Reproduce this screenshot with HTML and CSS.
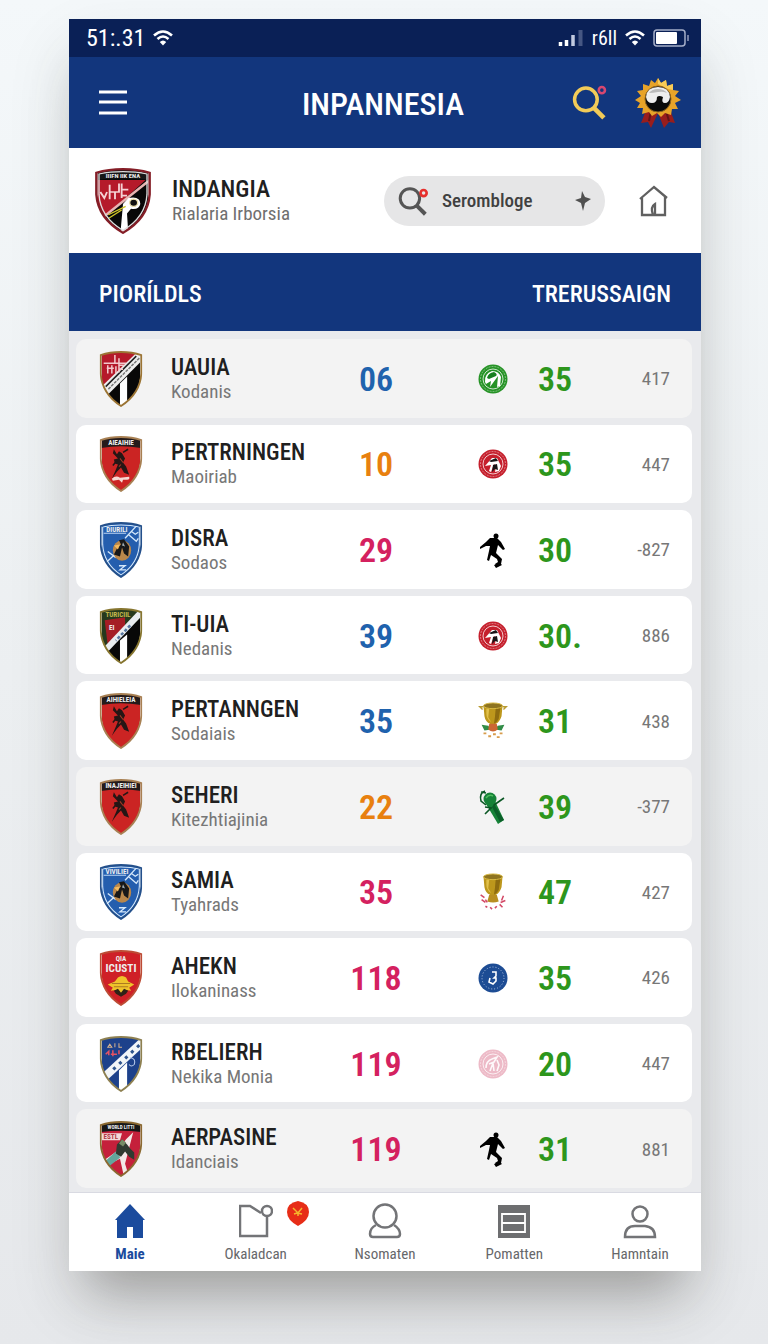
FILE: index.html
```html
<!DOCTYPE html>
<html lang="en">
<head>
  <meta charset="UTF-8">
  <meta name="viewport" content="width=device-width, initial-scale=1.0">
  <title>INPANNESIA</title>
  <link rel="stylesheet" href="styles.css">
</head>
<body>

  <!-- Shared shapes -->
  <svg class="defs" aria-hidden="true">
    <clipPath id="shield"><path d="M21 1C14 1 7 2 2 4V22C2 37 10 47 21 54C32 47 40 37 40 22V4C35 2 28 1 21 1Z"/></clipPath>
    <symbol id="outline" viewBox="0 0 42 55">
      <path d="M21 1C14 1 7 2 1 4V22C2 37 10 47 21 54C32 47 40 37 41 22V4C35 2 28 1 21 1Z" fill="none" stroke="currentColor" stroke-width="1.800"/>
    </symbol>
    <symbol id="wifi" viewBox="0 0 20 16">
      <path d="M1 5.500Q10-2.500 19 5.500M4.500 9Q10 4 15.500 9" fill="none" stroke="currentColor" stroke-width="2.600"/>
      <path d="M6.800 12Q10 9 13.200 12L10 15.500Z" fill="currentColor"/>
    </symbol>
    <symbol id="search" viewBox="0 0 34 34">
      <circle cx="13.500" cy="14" r="11" fill="none" stroke="currentColor" stroke-width="3.400"/>
      <path d="M21 22L31 32" stroke="currentColor" stroke-width="4.500"/>
    </symbol>
    <symbol id="crest-diagonal" viewBox="0 0 42 55">
      <g clip-path="url(#shield)">
        <path d="M0 0H42V55H0Z" fill="#080808"/>
        <path d="M0 0H42V4L5 41H0Z" fill="#b51a2a"/>
        <path d="M37 1L3 34L8 43L42 9V1Z" fill="#eee"/>
        <path d="M36 5L6 35" stroke="#222" stroke-width="1.500"/>
        <path d="M39 7L8 38" stroke="#777" stroke-width="1.500" stroke-dasharray="3 1"/>
        <path d="M20 32L27 25V55H20Z" fill="#fff"/>
        <path d="M15 4V12M4 12H26M19 7V21M8 14V22M12 14V22M16 15V22M7 17H14M19 14H24M19 18H23" stroke="#f2c8cb" stroke-width="1.500" fill="none"/>
      </g>
      <use href="#outline" color="#9b7434"/>
    </symbol>
    <symbol id="crest-red" viewBox="0 0 42 55">
      <g clip-path="url(#shield)">
        <path d="M0 0H42V55H0Z" fill="#cb2423"/>
        <path d="M0 0H42V12Q21 8 0 12Z" fill="#241b1b"/>
        <path d="M14 13L17 18L19 15L22 17L25 22L23 26L26 30L29 38L24 36L21 31L17 35L12 42L16 33L18 28L15 27L14 23L18 22L13 17Z" fill="#251615"/>
        <path d="M23 16L28 13M17 24L13 29" stroke="#251615" stroke-width="1.500"/>
        <path d="M20 22L23 26M19 30L21 28" stroke="#a53a25"/>
      </g>
      <use href="#outline" color="#a88053"/>
    </symbol>
    <symbol id="crest-blue" viewBox="0 0 42 55">
      <g clip-path="url(#shield)">
        <path d="M0 0H42V55H0Z" fill="#245eae"/>
        <path d="M4 11H26" stroke="#bdd6f3"/>
        <path d="M36 4L25 16M28 12L36 19L38 16M31 9L35 12L38 10M16 31L5 41M8 29L16 35M19 43H25L20 47H26" fill="none" stroke="#d5e8fa" stroke-width="1.300"/>
        <ellipse cx="22" cy="28" rx="9" ry="10" fill="#b9874b"/>
        <path d="M19 18L24 17L29 24L28 34L24 31L22 25L20 34L14 32L17 26L21 22Z" fill="#171819"/>
        <path d="M14 23L20 22L18 27Z" fill="#f2bb60"/>
        <path d="M23 20L25 24L22 23Z" fill="#9eabb2"/>
      </g>
      <path d="M21 3Q11 3 3 5V22Q4 41 21 52Q38 41 39 22V5Q31 3 21 3Z" fill="none" stroke="#d5e8fa"/>
      <use href="#outline" color="#24508b"/>
    </symbol>
    <symbol id="seal" viewBox="0 0 30 30">
      <circle cx="15" cy="15" r="14.500" fill="currentColor"/>
      <circle cx="15" cy="15" r="10" fill="none" stroke="#fff" stroke-opacity=".75"/>
      <circle cx="15" cy="15" r="12.500" fill="none" stroke="#fff" stroke-opacity=".4" stroke-dasharray="2 1"/>
    </symbol>
    <symbol id="seal-red" viewBox="0 0 30 30">
      <use href="#seal" color="#c51f2c"/>
      <path d="M7 17L14 9L19 9L23 17L21 22L17 23L18 17L16 15L13 23L11 22L13 16Z" fill="#fff"/>
      <path d="M11 12L18 9L20 12L13 13ZM15 16L19 15L20 21L17 20L14 23Z" fill="#181416"/>
    </symbol>
    <symbol id="player" viewBox="0 0 30 36">
      <circle cx="18" cy="4" r="2.500"/>
      <path d="M12 6L19 6L23 10L27 17L25 18L20 13L18 21L24 27L23 32L19 35L17 32L20 30L19 27L13 23L11 29L9 28L11 19L12 14L8 14L2 17V15L8 10Z"/>
      <path d="M16 33L22 31L24 33L18 36Z"/>
    </symbol>
    <symbol id="cup" viewBox="0 0 30 40">
      <path d="M5 4H25L24 15Q22 21 18 23L19 28H11L12 23Q7 21 6 15Z" fill="#bd971c"/>
      <path d="M18 5H23L21 18Q19 22 16 23L17 16Z" fill="#8e6c10"/>
      <path d="M8 7H11L10 16L13 21Q8 18 8 12Z" fill="#e2c14b"/>
      <ellipse cx="15" cy="4" rx="10" ry="3" fill="#8e7420" stroke="#d9ba45"/>
    </symbol>
  </svg>

  <div class="phone">
    <div class="status">
      <div class="status-group">
        <span class="time">51:.31</span>
        <svg class="wifi" aria-hidden="true"><use href="#wifi"/></svg>
      </div>
      <div class="status-group">
        <svg class="signal" viewBox="0 0 26 18" aria-hidden="true">
          <path d="M2.500 17V13M8.500 17V11" stroke="#fff" stroke-width="3.500"/>
          <path d="M15 17V6" stroke="#c2cae0" stroke-width="3.500"/>
          <path d="M22.500 17V1" stroke="#465783" stroke-width="4"/>
        </svg>
        <span class="carrier">r6ll</span>
        <svg class="wifi" aria-hidden="true"><use href="#wifi"/></svg>
        <svg class="battery" viewBox="0 0 37 18" aria-hidden="true">
          <rect x="1" y="1" width="31" height="16" rx="3" fill="none" stroke="#a5aec9" stroke-width="1.500"/>
          <rect x="3" y="3" width="21" height="12" rx="1" fill="#fff"/>
          <path d="M35 6V12" stroke="#717da3" stroke-width="2"/>
        </svg>
      </div>
    </div>

    <header class="topbar">
      <button class="icon-button" aria-label="Menu">
        <svg class="menu-icon" viewBox="0 0 28 26"><path d="M0 2H28M0 12H28M0 23H28" stroke="#fff" stroke-width="3"/></svg>
      </button>
      <h1>INPANNESIA</h1>
      <div class="topbar-actions">
        <button class="icon-button" aria-label="Search">
          <svg class="top-search" viewBox="0 0 34 34">
            <use href="#search" color="#f2cb58"/>
            <circle cx="29" cy="5" r="3" fill="none" stroke="#d74770" stroke-width="2.500"/>
          </svg>
        </button>
        <button class="icon-button" aria-label="Award">
          <svg class="award" viewBox="0 0 46 52">
            <path d="M12 31L6 46L13 45L16 51L23 36L29 51L34 45L40 46L34 30Z" fill="#981d1c"/>
            <path d="M16 34L14 44M31 34L34 44" stroke="#621417" stroke-width="2"/>
            <path d="M23 1L26 6L31 3L32 9L38 7L38 13L44 14L40 19L46 23L40 26L43 32L37 32L36 38L30 36L26 40L22 36L17 39L14 35L7 37L8 31L2 31L5 26L0 23L6 19L2 14L8 13L8 7L14 9L16 3L20 6Z" fill="#e7a329"/>
            <path d="M23 1L26 6L31 3L32 9L38 7L38 13L33 12L23 7Z" fill="#f9cc57"/>
            <circle cx="23" cy="22" r="13" fill="#0b0b0b" stroke="#8e641f"/>
            <path d="M11 20Q12 10 23 10T35 20Q34 26 30 26Q26 26 28 20Q24 18 22 20Q22 26 17 26Q12 26 11 20Z" fill="#eee"/>
            <path d="M14 16Q17 12 23 12T32 16Q28 14 23 15T14 16Z" fill="#bbb"/>
          </svg>
        </button>
      </div>
    </header>

    <section class="team">
      <svg class="team-crest" viewBox="0 0 42 55" preserveAspectRatio="none" aria-hidden="true">
        <g clip-path="url(#shield)">
          <path d="M0 0H42V55H0Z" fill="#080808"/>
          <path d="M0 10H38L5 43H0Z" fill="#b51a2a"/>
          <path d="M0 0H42V10Q21 7 0 10Z" fill="#171717"/>
          <path d="M40 11L5 42" stroke="#e8b5b2" stroke-width="2"/>
          <path d="M11 14V20H18V13M20 13V25M4 20L7 25L9 20M11 20V26M15 20V26M20 18H25M20 23H24" fill="none" stroke="#f5d2d4" stroke-width="1.400"/>
          <path d="M21 30L25 25Q34 23 34 30Q33 35 27 34L24 38L25 55H19Z" fill="#fff"/>
          <circle cx="29" cy="29" r="3" fill="#111" stroke="#eee1ad"/>
          <path d="M10 39L23 32M10 42L20 35" stroke="#d0c62a"/>
        </g>
        <text x="21" y="8" class="crest-text crest-tiny">IIIFN IIK ENA</text>
        <path d="M21 3Q11 3 3 5V22Q4 41 21 52Q38 41 39 22V5Q31 3 21 3Z" fill="none" stroke="#ddd"/>
        <use href="#outline" color="#841d26"/>
      </svg>
      <div class="team-name">
        <h2>INDANGIA</h2>
        <p>Rialaria Irborsia</p>
      </div>
      <label class="search">
        <svg class="search-icon" viewBox="0 0 34 34" aria-hidden="true">
          <use href="#search" color="#555"/>
          <circle cx="29" cy="8" r="3.500" fill="none" stroke="#e62f2c" stroke-width="3"/>
        </svg>
        <input type="text" placeholder="Serombloge" aria-label="Search">
        <svg class="spark" viewBox="0 0 16 20" aria-hidden="true"><path d="M7 0L10 6L16 8L10 12L8 20L6 12L0 9L6 7Z" fill="#505050"/></svg>
      </label>
      <a class="home-link" href="#" aria-label="Home">
        <svg viewBox="0 0 30 32"><path d="M1 14L15 2L28 13M3 13V30H14Q11 22 16 19V30H26V12" fill="none" stroke="#606060" stroke-width="2.300"/></svg>
      </a>
    </section>

    <table class="standings">
      <thead>
        <tr><th scope="col">PIORÍLDLS</th><th scope="col">TRERUSSAIGN</th></tr>
      </thead>
      <tbody>
        <tr class="muted">
          <td><svg class="crest"><use href="#crest-diagonal"/></svg></td>
          <td><strong>UAUIA</strong><span>Kodanis</span></td>
          <td class="points blue">06</td>
          <td class="mark"><svg viewBox="0 0 30 30"><use href="#seal" color="#269326"/><path d="M7 18Q6 10 14 7Q21 7 23 13L22 22L19 23L20 12L12 23L13 17L8 20Z" fill="#fff"/><path d="M9 14Q10 9 16 8Q20 10 18 12L11 15Z" fill="#188020"/></svg></td>
          <td class="score">35</td>
          <td class="diff">417</td>
        </tr>
        <tr>
          <td><svg class="crest" viewBox="0 0 42 55"><use href="#crest-red"/><text x="21" y="9" class="crest-text">AIEAIHIE</text><path d="M12 42Q16 38 20 41L29 40Q30 43 27 43H23L22 46L19 43L13 44Z" fill="#f6dad4"/></svg></td>
          <td><strong>PERTRNINGEN</strong><span>Maoiriab</span></td>
          <td class="points orange">10</td>
          <td class="mark"><svg viewBox="0 0 30 30"><use href="#seal-red"/></svg></td>
          <td class="score">35</td>
          <td class="diff">447</td>
        </tr>
        <tr>
          <td><svg class="crest" viewBox="0 0 42 55"><use href="#crest-blue"/><text x="17" y="10" class="crest-text">DIURILI</text></svg></td>
          <td><strong>DISRA</strong><span>Sodaos</span></td>
          <td class="points pink">29</td>
          <td class="mark"><svg viewBox="0 0 30 36"><use href="#player"/></svg></td>
          <td class="score">30</td>
          <td class="diff">-827</td>
        </tr>
        <tr>
          <td>
            <svg class="crest" viewBox="0 0 42 55">
              <g clip-path="url(#shield)">
                <path d="M0 0H42V55H0Z" fill="#080808"/>
                <path d="M0 0H42V8L5 43H0Z" fill="#26391d"/>
                <path d="M5 12L25 9V22L8 37Z" fill="#a51d25"/>
                <path d="M40 5L5 42" stroke="#e9edf0" stroke-width="6"/>
                <path d="M30 17L16 32" stroke="#5877a0" stroke-width="2.500" stroke-dasharray="3 2"/>
                <path d="M20 32L27 26V55H20Z" fill="#fff"/>
              </g>
              <text x="18" y="9" class="crest-text crest-gold">TURICIIL</text>
              <text x="12" y="22" class="crest-text">EI</text>
              <use href="#outline" color="#86752f"/>
            </svg>
          </td>
          <td><strong>TI-UIA</strong><span>Nedanis</span></td>
          <td class="points blue">39</td>
          <td class="mark"><svg viewBox="0 0 30 30"><use href="#seal-red"/></svg></td>
          <td class="score">30.</td>
          <td class="diff">886</td>
        </tr>
        <tr>
          <td><svg class="crest" viewBox="0 0 42 55"><use href="#crest-red"/><text x="21" y="9" class="crest-text">AIHIELEIA</text></svg></td>
          <td><strong>PERTANNGEN</strong><span>Sodaiais</span></td>
          <td class="points blue">35</td>
          <td class="mark">
            <svg viewBox="0 0 30 40">
              <use href="#cup"/>
              <path d="M5 5H1L4 8M25 5H29L26 8" fill="none" stroke="#b99b32" stroke-width="1.500"/>
              <path d="M3 24L10 25L13 29L6 30ZM27 24L20 25L17 29L24 30Z" fill="#318c47"/>
              <path d="M11 23H19L20 29Q15 33 10 29Z" fill="#cc6633"/>
              <path d="M5 33H8M10 36H13M15 34H18M19 37H22M22 33H25" stroke="#d89c4c" stroke-width="2"/>
            </svg>
          </td>
          <td class="score">31</td>
          <td class="diff">438</td>
        </tr>
        <tr class="muted">
          <td><svg class="crest" viewBox="0 0 42 55"><use href="#crest-red"/><text x="21" y="9" class="crest-text">INAJEIHIEI</text></svg></td>
          <td><strong>SEHERI</strong><span>Kitezhtiajinia</span></td>
          <td class="points orange">22</td>
          <td class="mark">
            <svg viewBox="0 0 30 36">
              <circle cx="12" cy="10" r="6.500" fill="#168238"/>
              <path d="M8 15L17 12L26 31L20 35Z" fill="#168238"/>
              <path d="M16 15L26 31L22 33L14 18Z" fill="#0b5f29"/>
              <path d="M7 2Q1 4 3 12L8 16M3 3L8 4M7 25L13 19M16 16L26 9M7 18L14 19" fill="none" stroke="#0a5724" stroke-width="1.600"/>
              <path d="M8 9Q11 5 15 7" fill="none" stroke="#4ebd5c" stroke-width="1.500"/>
            </svg>
          </td>
          <td class="score">39</td>
          <td class="diff">-377</td>
        </tr>
        <tr>
          <td><svg class="crest" viewBox="0 0 42 55"><use href="#crest-blue"/><text x="17" y="10" class="crest-text">VIVILIEI</text></svg></td>
          <td><strong>SAMIA</strong><span>Tyahrads</span></td>
          <td class="points pink">35</td>
          <td class="mark">
            <svg viewBox="0 0 30 40">
              <use href="#cup"/>
              <path d="M11 23H19L21 30Q15 32 9 30Z" fill="#b88e20"/>
              <path d="M2 23L6 26M3 28L7 31M7 28L9 31M26 24L24 29M28 29L23 31M22 33L25 36M7 35L9 36M12 36L14 38M17 37L19 35" stroke="#d34865" stroke-width="1.600"/>
            </svg>
          </td>
          <td class="score">47</td>
          <td class="diff">427</td>
        </tr>
        <tr>
          <td>
            <svg class="crest" viewBox="0 0 42 55">
              <g clip-path="url(#shield)">
                <path d="M0 0H42V55H0Z" fill="#cf2027"/>
                <path d="M8 34L15 31L18 27Q22 24 26 27L28 31L34 34L29 37L31 40L24 39L21 43L18 39L11 40L13 37Z" fill="#efc32b"/>
                <path d="M14 40L18 38L21 42L24 38L28 40L26 43L21 46L16 43Z" fill="#302217"/>
                <path d="M12 33H30M14 36H28" stroke="#ac7b21"/>
              </g>
              <text x="21" y="11" class="crest-text">QIA</text>
              <text x="21" y="22" class="crest-text crest-large">ICUSTI</text>
              <use href="#outline" color="#bd4c35"/>
            </svg>
          </td>
          <td><strong>AHEKN</strong><span>Ilokaninass</span></td>
          <td class="points pink">118</td>
          <td class="mark"><svg viewBox="0 0 30 30"><circle cx="15" cy="15" r="14.500" fill="#1d4c94"/><circle cx="15" cy="15" r="11" fill="none" stroke="#b1c4e2" stroke-dasharray="1 2"/><path d="M14 9H18V13L16 15H18V18L15 21L11 19L12 15" fill="none" stroke="#fff" stroke-width="1.600"/></svg></td>
          <td class="score">35</td>
          <td class="diff">426</td>
        </tr>
        <tr>
          <td>
            <svg class="crest" viewBox="0 0 42 55">
              <g clip-path="url(#shield)">
                <path d="M0 0H42V55H0Z" fill="#1d418b"/>
                <path d="M42 6L5 40" stroke="#f2f5f8" stroke-width="8"/>
                <path d="M39 9L10 36" stroke="#30558e" stroke-width="3" stroke-dasharray="3 5"/>
                <path d="M19 34L27 26V55H19Z" fill="#fff"/>
                <path d="M8 11L10 8L12 11ZM15 7V11M19 7V11H22" stroke="#d7b38d" fill="none"/>
                <path d="M6 18L9 15V19M13 14V20M11 18H17M19 14V18" stroke="#e55363" stroke-width="1.500" fill="none"/>
                <path d="M30 21Q36 22 34 28Q31 31 29 28" fill="none" stroke="#b9cbec"/>
              </g>
              <use href="#outline" color="#8e8051"/>
            </svg>
          </td>
          <td><strong>RBELIERH</strong><span>Nekika Monia</span></td>
          <td class="points pink">119</td>
          <td class="mark"><svg viewBox="0 0 30 30"><use href="#seal" color="#edbac7"/><path d="M8 19Q8 12 14 10L19 8L16 13L11 15M12 22L15 14L16 22M19 11L21 16L19 22" fill="none" stroke="#fff" stroke-width="1.600" stroke-opacity=".9"/></svg></td>
          <td class="score">20</td>
          <td class="diff">447</td>
        </tr>
        <tr class="muted">
          <td>
            <svg class="crest" viewBox="0 0 42 55">
              <g clip-path="url(#shield)">
                <path d="M0 0H42V55H0Z" fill="#c5203b"/>
                <path d="M0 0H42V11Q21 8 0 11Z" fill="#171717"/>
                <path d="M2 12H22L20 19H2Z" fill="#f2dada"/>
                <path d="M26 18L33 11L25 42L29 55H24L20 37L8 43L5 38L18 29Z" fill="#f3e9e8"/>
                <path d="M6 39L18 28L20 36L10 44Z" fill="#62a69c"/>
                <path d="M17 23L22 18L27 23L30 27L34 31V38L29 35L25 30L21 35L16 32Z" fill="#303a31"/>
                <path d="M22 18L26 21L23 25L19 22Z" fill="#778b66"/>
              </g>
              <text x="21" y="8" class="crest-text crest-tiny">WORLD LITTI</text>
              <text x="11" y="18" class="crest-text crest-red-text">ESTL</text>
              <use href="#outline" color="#8b6931"/>
            </svg>
          </td>
          <td><strong>AERPASINE</strong><span>Idanciais</span></td>
          <td class="points pink">119</td>
          <td class="mark"><svg viewBox="0 0 30 36"><use href="#player"/></svg></td>
          <td class="score">31</td>
          <td class="diff">881</td>
        </tr>
      </tbody>
    </table>

    <nav class="tabs">
      <a class="active" href="#">
        <svg viewBox="0 0 34 36"><path d="M17 1L32 17H30V35H20V24H14V35H4V17H2Z" fill="#1b4b9d"/></svg>
        Maie
      </a>
      <a href="#">
        <span class="tab-icon">
          <svg viewBox="0 0 34 36"><path d="M22 10L11 3H1V33H28V14" fill="none" stroke="#737477" stroke-width="2.500"/><circle cx="28" cy="8" r="5" fill="none" stroke="#737477" stroke-width="2.500"/></svg>
          <svg class="pin" viewBox="0 0 22 26"><path d="M11 0Q0 2 0 11Q0 19 11 25Q22 19 22 11Q22 2 11 0Z" fill="#e72d17"/><path d="M6 7L11 12L15 7M11 12V15M7 13L10 12L15 13" fill="none" stroke="#f5b62d" stroke-width="1.500"/></svg>
        </span>
        Okaladcan
      </a>
      <a href="#">
        <svg viewBox="0 0 34 36"><circle cx="17" cy="13" r="11.500" fill="none" stroke="#737477" stroke-width="2.500"/><path d="M8 22Q2 25 2 31Q2 34 5 34H29Q32 34 32 31Q32 26 26 22" fill="none" stroke="#737477" stroke-width="2.500"/></svg>
        Nsomaten
      </a>
      <a href="#">
        <svg viewBox="0 0 34 36"><path d="M1 2H33V35H1Z" fill="#6d6e70"/><path d="M5 11H28V29H5ZM5 20H28" fill="none" stroke="#fff" stroke-width="1.800"/></svg>
        Pomatten
      </a>
      <a href="#">
        <svg viewBox="0 0 34 36"><circle cx="17" cy="11" r="7.500" fill="none" stroke="#737477" stroke-width="2.500"/><path d="M2 34Q2 23 12 23H22Q32 24 32 34Z" fill="none" stroke="#737477" stroke-width="2.500"/></svg>
        Hamntain
      </a>
    </nav>
  </div>

</body>
</html>
```

FILE: styles.css
```css
* {
  box-sizing: border-box;
}
body {
  margin: 0;
  min-height: 100vh;
  padding: 19px 67px 73px 69px;
  display: flex;
  background: linear-gradient(#f4f8fa, #eceff1 50%, #e6e8eb);
  font-family: "Roboto Condensed", "Liberation Sans Narrow", Roboto, sans-serif;
  color: #202020;
}
h1, h2, p {
  margin: 0;
}
svg {
  display: block;
}
.defs {
  position: absolute;
  width: 0;
  height: 0;
}
.phone {
  flex: 1;
  min-width: 0;
  display: flex;
  flex-direction: column;
  background: #e9eaed;
  box-shadow: 0 40px 50px -20px rgba(60, 56, 52, 0.35), 0 30px 60px rgba(60, 56, 52, 0.12);
}

/* Status bar */
.status {
  height: 38px;
  padding: 0 11px 0 17px;
  display: flex;
  justify-content: space-between;
  align-items: center;
  background: #0a2056;
  color: #fff;
}
.status-group {
  display: flex;
  align-items: center;
  gap: 8px;
}
.time {
  font-size: 24px;
}
.carrier {
  font-size: 20px;
}
.wifi {
  width: 20px;
  height: 16px;
}
.signal {
  width: 26px;
  height: 18px;
}
.battery {
  width: 37px;
  height: 18px;
}

/* Title bar */
.topbar {
  height: 91px;
  padding: 0 20px 0 30px;
  display: grid;
  grid-template-columns: auto 1fr auto;
  align-items: center;
  background: #12367d;
  color: #fff;
}
.topbar h1 {
  padding: 2px 0 0 67px;
  font-size: 32px;
  font-weight: 500;
  text-align: center;
}
.topbar-actions {
  display: flex;
  align-items: center;
  gap: 28px;
}
.icon-button {
  padding: 0;
  border: none;
  background: none;
  cursor: pointer;
}
.menu-icon {
  width: 28px;
  height: 26px;
}
.top-search {
  width: 35px;
  height: 35px;
}
.award {
  width: 46px;
  height: 52px;
}

/* Selected team */
.team {
  height: 105px;
  padding: 0 32px 0 26px;
  display: flex;
  align-items: center;
  background: #fff;
}
.team-crest {
  width: 56px;
  height: 66px;
  margin-right: 21px;
}
.team-name {
  flex: 1;
}
.team-name h2 {
  font-size: 24px;
  font-weight: 500;
  line-height: 26px;
}
.team-name p {
  font-size: 19px;
  line-height: 24px;
  color: #6f6f6f;
}
.search {
  width: 221px;
  height: 50px;
  padding: 0 14px;
  display: flex;
  align-items: center;
  gap: 14px;
  border-radius: 25px;
  background: #e6e6e7;
}
.search-icon {
  width: 30px;
  height: 30px;
}
.search input {
  flex: 1;
  min-width: 0;
  padding: 0;
  border: none;
  outline: none;
  background: none;
  font-family: inherit;
  font-size: 19px;
  font-weight: 500;
  color: #404040;
}
.search input::placeholder {
  color: #404040;
}
.spark {
  width: 16px;
  height: 20px;
}
.home-link {
  margin-left: 34px;
}
.home-link svg {
  width: 30px;
  height: 32px;
}

/* Standings */
.standings {
  flex: 1;
  display: flex;
  flex-direction: column;
}
.standings thead tr {
  height: 78px;
  padding: 3px 30px 0;
  display: flex;
  justify-content: space-between;
  align-items: center;
  background: #12367d;
  color: #fff;
}
.standings th {
  padding: 0;
  font-size: 24px;
  font-weight: 500;
}
.standings tbody {
  flex: 1;
  padding: 8px 9px 4px 7px;
  display: flex;
  flex-direction: column;
  gap: 7px;
}
.standings tbody tr {
  flex: 1;
  padding: 1px 22px 0 23px;
  display: grid;
  grid-template-columns: 72px 1fr 60px 132px 66px 66px;
  align-items: center;
  border-radius: 10px;
  background: #fff;
}
.standings .muted {
  background: #f3f3f3;
}
.standings td {
  padding: 0;
}
.crest {
  width: 44px;
  height: 56px;
}
.crest-text {
  font-size: 7px;
  font-weight: bold;
  text-anchor: middle;
  fill: #eee;
}
.crest-tiny {
  font-size: 5px;
}
.crest-large {
  font-size: 11px;
}
.crest-gold {
  fill: #c2b54c;
}
.crest-red-text {
  fill: #b23a44;
}
.standings strong {
  display: block;
  font-size: 23px;
  font-weight: 500;
  line-height: 25px;
}
.standings td span {
  display: block;
  font-size: 19px;
  line-height: 23px;
  color: #777;
}
.standings .points {
  font-size: 34px;
  font-weight: 600;
  text-align: center;
}
.blue {
  color: #1f62ad;
}
.orange {
  color: #e8800f;
}
.pink {
  color: #d4215f;
}
.mark svg {
  width: 30px;
  height: 38px;
  margin-left: 72px;
}
.standings .score {
  font-size: 34px;
  font-weight: 600;
  color: #2d961c;
}
.diff {
  font-size: 19px;
  text-align: right;
  color: #777;
}

/* Bottom tabs */
.tabs {
  height: 79px;
  padding-top: 10px;
  display: grid;
  grid-template-columns: 122px 1fr 1fr 1fr 122px;
  border-top: 1px solid #d9dae2;
  background: #fff;
}
.tabs a {
  display: flex;
  flex-direction: column;
  align-items: center;
  gap: 5px;
  font-size: 15px;
  line-height: 20px;
  color: #66676a;
  text-decoration: none;
}
.tabs .active {
  font-weight: bold;
  color: #1b4b9d;
}
.tabs svg {
  width: 34px;
  height: 36px;
}
.tab-icon {
  position: relative;
}
.tabs .pin {
  position: absolute;
  top: -2px;
  left: 48px;
  width: 22px;
  height: 26px;
}
```
